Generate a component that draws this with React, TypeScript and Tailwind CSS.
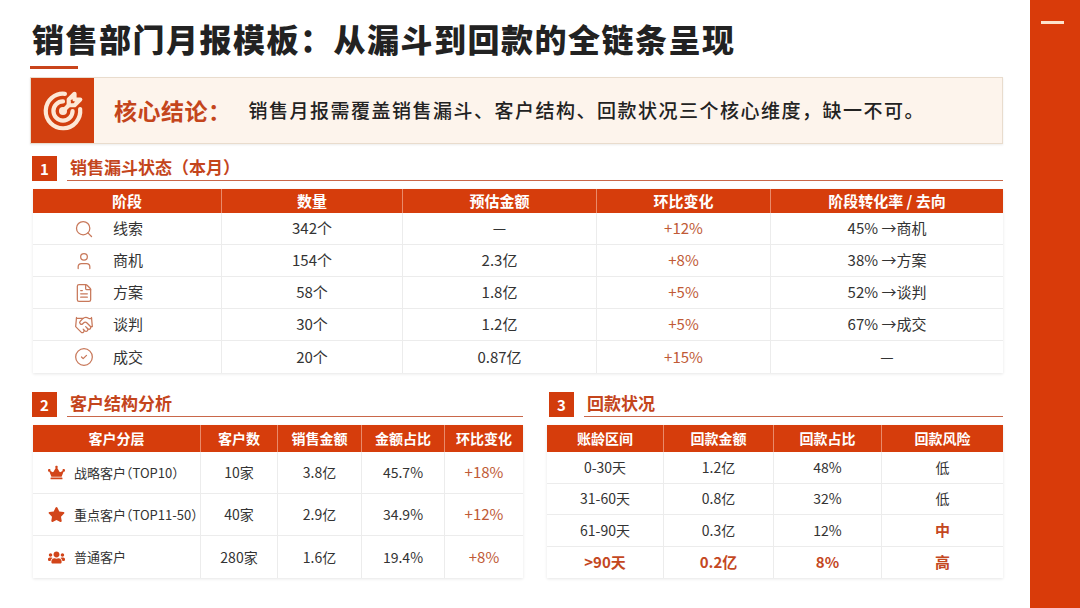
import { Search, User, FileText, Handshake, CircleCheck } from "lucide-react";
import { FaCrown, FaStar, FaUsers } from "react-icons/fa";
import { TbTargetArrow } from "react-icons/tb";
import type { ReactNode } from "react";

const font = { fontFamily: '"Noto Sans CJK SC", "Noto Sans", sans-serif' };

const funnel = [
  { icon: Search, stage: "线索", count: "342个", amount: "—", change: "+12%", rate: "45% →商机" },
  { icon: User, stage: "商机", count: "154个", amount: "2.3亿", change: "+8%", rate: "38% →方案" },
  { icon: FileText, stage: "方案", count: "58个", amount: "1.8亿", change: "+5%", rate: "52% →谈判" },
  { icon: Handshake, stage: "谈判", count: "30个", amount: "1.2亿", change: "+5%", rate: "67% →成交" },
  { icon: CircleCheck, stage: "成交", count: "20个", amount: "0.87亿", change: "+15%", rate: "—" },
];

const customers = [
  { icon: FaCrown, name: "战略客户（TOP10）", count: "10家", sales: "3.8亿", share: "45.7%", change: "+18%" },
  { icon: FaStar, name: "重点客户（TOP11-50）", count: "40家", sales: "2.9亿", share: "34.9%", change: "+12%" },
  { icon: FaUsers, name: "普通客户", count: "280家", sales: "1.6亿", share: "19.4%", change: "+8%" },
];

const payments = [
  { range: "0-30天", amount: "1.2亿", share: "48%", risk: "低", level: 0 },
  { range: "31-60天", amount: "0.8亿", share: "32%", risk: "低", level: 0 },
  { range: "61-90天", amount: "0.3亿", share: "12%", risk: "中", level: 1 },
  { range: ">90天", amount: "0.2亿", share: "8%", risk: "高", level: 2 },
];

function SectionHeader({ num, title }: { num: string; title: string }) {
  return (
    <div className="flex items-end">
      <div className="w-[25px] h-[25px] ml-[2px] bg-[#d23c0c] text-white text-[15px] font-bold flex items-center justify-center leading-none">
        {num}
      </div>
      <div className="flex-1 ml-[10px] border-b-[1.5px] border-[#c9674a] pl-[3px] pb-[1px]">
        <span className="text-[17px] font-bold text-[#c4451c] leading-[22px]">{title}</span>
      </div>
    </div>
  );
}

function HeadCell({ children, last, className = "" }: { children: ReactNode; last?: boolean; className?: string }) {
  return (
    <div
      className={`flex items-center justify-center text-white font-bold ${
        last ? "" : "border-r border-[#e98a6a]"
      } ${className}`}
    >
      {children}
    </div>
  );
}

function Cell({ children, last, className = "" }: { children: ReactNode; last?: boolean; className?: string }) {
  return (
    <div
      className={`flex items-center justify-center text-[#333] ${
        last ? "" : "border-r border-[#ececec]"
      } ${className}`}
    >
      {children}
    </div>
  );
}

export default function App() {
  return (
    <div className="flex w-[1080px] h-[608px] bg-white overflow-hidden" style={font}>
      <div className="flex-1 pl-[30px] pr-[27px] pt-[18px] flex flex-col">
        <h1 className="text-[32px] font-black leading-[40px] tracking-[1.5px] text-[#222] pl-[2px]">
          销售部门月报模板：从漏斗到回款的全链条呈现
        </h1>
        <div className="mt-[8px] w-[48px] h-[3px] bg-[#c9441b]" />

        <div className="mt-[8px] h-[67px] flex bg-[#fdf4ec] border border-[#e9dccd] shadow-[0_1px_2px_rgba(0,0,0,0.08)]">
          <div className="w-[63px] bg-[#d2400f] flex items-center justify-center">
            <TbTargetArrow size={46} color="#fde8d6" strokeWidth={2.2} />
          </div>
          <div className="flex items-center pl-[20px]">
            <span className="text-[23px] font-bold text-[#c4451c] tracking-[0.5px]">核心结论：</span>
            <span className="ml-[17px] text-[19px] font-medium text-[#222] tracking-[1.5px]">
              销售月报需覆盖销售漏斗、客户结构、回款状况三个核心维度，缺一不可。
            </span>
          </div>
        </div>

        <div className="mt-[11px]">
          <SectionHeader num="1" title="销售漏斗状态（本月）" />
        </div>

        <div className="mt-[8px] ml-[3px] shadow-[0_1px_3px_rgba(0,0,0,0.1)]">
          <div className="grid grid-cols-[189px_181px_194px_174px_232px] h-[24px] bg-[#d63d0c] text-[15px]">
            <HeadCell>阶段</HeadCell>
            <HeadCell>数量</HeadCell>
            <HeadCell>预估金额</HeadCell>
            <HeadCell>环比变化</HeadCell>
            <HeadCell last>阶段转化率 / 去向</HeadCell>
          </div>
          {funnel.map((r, i) => {
            const Icon = r.icon;
            return (
              <div
                key={r.stage}
                className={`grid grid-cols-[189px_181px_194px_174px_232px] h-[32px] bg-white text-[15px] ${
                  i < funnel.length - 1 ? "border-b border-[#ececec]" : ""
                }`}
              >
                <div className="flex items-center pl-[41px] border-r border-[#ececec] text-[#333]">
                  <Icon size={20} strokeWidth={1.5} color="#c8785a" />
                  <span className="ml-[19px]">{r.stage}</span>
                </div>
                <Cell>{r.count}</Cell>
                <Cell>{r.amount}</Cell>
                <Cell className="text-[#c05a36]!">{r.change}</Cell>
                <Cell last>{r.rate}</Cell>
              </div>
            );
          })}
        </div>

        <div className="mt-[18px] flex gap-[24px]">
          <div className="w-[493px]">
            <SectionHeader num="2" title="客户结构分析" />
            <div className="mt-[8px] ml-[3px] shadow-[0_1px_3px_rgba(0,0,0,0.1)]">
              <div className="grid grid-cols-[168px_77px_84px_83px_78px] h-[27px] bg-[#d63d0c] text-[14px]">
                <HeadCell>客户分层</HeadCell>
                <HeadCell>客户数</HeadCell>
                <HeadCell>销售金额</HeadCell>
                <HeadCell>金额占比</HeadCell>
                <HeadCell last>环比变化</HeadCell>
              </div>
              {customers.map((r, i) => {
                const Icon = r.icon;
                return (
                  <div
                    key={r.name}
                    className={`grid grid-cols-[168px_77px_84px_83px_78px] h-[42px] bg-white text-[14px] ${
                      i < customers.length - 1 ? "border-b border-[#ececec]" : ""
                    }`}
                  >
                    <div className="flex items-center pl-[14px] border-r border-[#ececec] text-[13px] text-[#333] whitespace-nowrap [font-feature-settings:'halt']">
                      <span className="w-[18px] flex justify-center shrink-0">
                        <Icon size={17} color="#d2451a" />
                      </span>
                      <span className="ml-[9px]">{r.name}</span>
                    </div>
                    <Cell>{r.count}</Cell>
                    <Cell>{r.sales}</Cell>
                    <Cell>{r.share}</Cell>
                    <Cell last className="text-[#c05a36]! text-[15px]">{r.change}</Cell>
                  </div>
                );
              })}
            </div>
          </div>

          <div className="flex-1">
            <SectionHeader num="3" title="回款状况" />
            <div className="mt-[8px] shadow-[0_1px_3px_rgba(0,0,0,0.1)]">
              <div className="grid grid-cols-[117px_110px_108px_121px] h-[27px] bg-[#d63d0c] text-[14px]">
                <HeadCell>账龄区间</HeadCell>
                <HeadCell>回款金额</HeadCell>
                <HeadCell>回款占比</HeadCell>
                <HeadCell last>回款风险</HeadCell>
              </div>
              {payments.map((r, i) => {
                const hot = r.level === 2;
                return (
                  <div
                    key={r.range}
                    className={`grid grid-cols-[117px_110px_108px_121px] h-[31.5px] bg-white ${
                      hot ? "text-[15px] font-bold" : "text-[14px]"
                    } ${i < payments.length - 1 ? "border-b border-[#ececec]" : ""}`}
                  >
                    <Cell className={hot ? "text-[#c4481f]!" : ""}>{r.range}</Cell>
                    <Cell className={hot ? "text-[#c4481f]!" : ""}>{r.amount}</Cell>
                    <Cell className={hot ? "text-[#c4481f]!" : ""}>{r.share}</Cell>
                    <Cell last className={r.level > 0 ? "text-[#c4481f]! font-bold text-[15px]" : ""}>
                      {r.risk}
                    </Cell>
                  </div>
                );
              })}
            </div>
          </div>
        </div>
      </div>
      <div className="w-[50px] bg-[#d93b0a] pt-[21px] pl-[11px]">
        <div className="w-[23px] h-[3px] bg-[#fde3cc]" />
      </div>
    </div>
  );
}
